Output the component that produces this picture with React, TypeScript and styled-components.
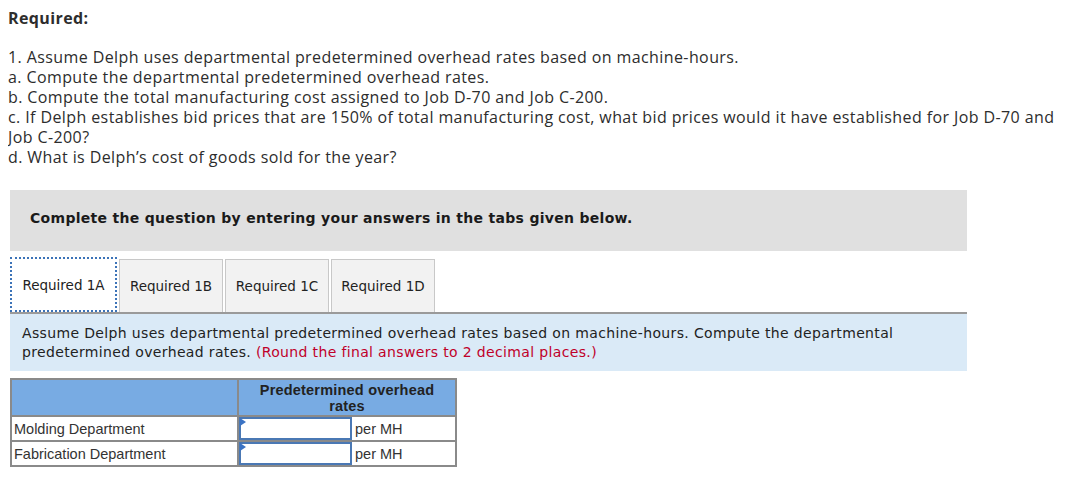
import styled, { createGlobalStyle } from 'styled-components';

const GlobalStyle = createGlobalStyle`
  body {
    margin: 8px;
    background: #ffffff;
    font-family: "Open Sans", "Liberation Sans", sans-serif;
    color: #2d2d2d;
  }
`;

const tabs = ['Required 1A', 'Required 1B', 'Required 1C', 'Required 1D'];

const questions = [
  '1. Assume Delph uses departmental predetermined overhead rates based on machine-hours.',
  'a. Compute the departmental predetermined overhead rates.',
  'b. Compute the total manufacturing cost assigned to Job D-70 and Job C-200.',
  'c. If Delph establishes bid prices that are 150% of total manufacturing cost, what bid prices would it have established for Job D-70 and Job C-200?',
  "d. What is Delph’s cost of goods sold for the year?",
];

const rows = ['Molding Department', 'Fabrication Department'];

export default function App() {
  return (
    <>
      <GlobalStyle />
      <Heading>Required:</Heading>
      <QuestionList>
        {questions.map((q) => (
          <QuestionLine key={q}>{q}</QuestionLine>
        ))}
      </QuestionList>

      <Instruction>Complete the question by entering your answers in the tabs given below.</Instruction>

      <TabBar>
        {tabs.map((t, i) => (
          <Tab key={t} $active={i === 0}>
            {t}
          </Tab>
        ))}
      </TabBar>

      <Panel>
        Assume Delph uses departmental predetermined overhead rates based on machine-hours. Compute the departmental
        predetermined overhead rates. <Hint>(Round the final answers to 2 decimal places.)</Hint>
      </Panel>

      <RateTable>
        <colgroup>
          <col style={{ width: 227 }} />
          <col style={{ width: 114 }} />
          <col style={{ width: 104 }} />
        </colgroup>
        <thead>
          <tr>
            <HeadCell />
            <HeadCell colSpan={2}>
              Predetermined overhead
              <br />
              rates
            </HeadCell>
          </tr>
        </thead>
        <tbody>
          {rows.map((r) => (
            <tr key={r}>
              <LabelCell>{r}</LabelCell>
              <InputCell>
                <Marker />
                <AnswerInput type="text" aria-label={r} />
              </InputCell>
              <UnitCell>per MH</UnitCell>
            </tr>
          ))}
        </tbody>
      </RateTable>
    </>
  );
}

const Heading = styled.div`
  font-size: 16px;
  font-weight: 700;
  line-height: 20px;
  letter-spacing: 0.4px;
  color: #2d2d2d;
  margin-bottom: 19px;
`;

const QuestionList = styled.div`
  font-size: 16px;
  line-height: 20px;
  letter-spacing: 0.4px;
`;

const QuestionLine = styled.div``;

const Instruction = styled.div`
  margin: 23px 0 0 2px;
  width: 957px;
  height: 61px;
  box-sizing: border-box;
  padding: 0 20px 6px;
  display: flex;
  align-items: center;
  background: #e0e0e0;
  font-family: "DejaVu Sans", Verdana, sans-serif;
  font-size: 14px;
  font-weight: 700;
  letter-spacing: 0.3px;
  color: #1a1a1a;
`;

const TabBar = styled.div`
  display: flex;
  gap: 2px;
  margin: 6px 0 0 2px;
  width: 957px;
  align-items: flex-end;
`;

const Tab = styled.div<{ $active?: boolean }>`
  width: ${({ $active }) => ($active ? '107px' : '104px')};
  height: ${({ $active }) => ($active ? '55px' : '53px')};
  box-sizing: border-box;
  display: flex;
  align-items: center;
  justify-content: center;
  font-family: "DejaVu Sans", Tahoma, sans-serif;
  font-size: 13.5px;
  color: #222;
  background: ${({ $active }) => ($active ? '#ffffff' : '#f2f2f2')};
  border: ${({ $active }) => ($active ? '2px dotted #3c73b8' : '1px solid #c8c8c8')};
  border-bottom: ${({ $active }) => ($active ? '2px dotted #3c73b8' : 'none')};
`;

const Panel = styled.div`
  margin-left: 2px;
  width: 957px;
  box-sizing: border-box;
  border-top: 2px solid #9a9a9a;
  background: #daeaf7;
  padding: 10px 12px 9px;
  font-family: "DejaVu Sans", Tahoma, sans-serif;
  font-size: 14px;
  line-height: 19px;
  letter-spacing: 0.35px;
  color: #222;
`;

const Hint = styled.span`
  color: #c0002a;
`;

const RateTable = styled.table`
  margin: 7px 0 0 2px;
  width: 445px;
  border-collapse: collapse;
  table-layout: fixed;
  font-family: "Liberation Sans", Arial, sans-serif;
  font-size: 14.5px;
  color: #333;
`;

const HeadCell = styled.th`
  height: 35px;
  padding: 0;
  background: #78abe3;
  border: 2px solid #8a8a8a;
  font-size: 14.5px;
  font-weight: 700;
  line-height: 16px;
  letter-spacing: 0.2px;
  color: #222;
  text-align: center;
`;

const LabelCell = styled.td`
  height: 23px;
  padding: 0 2px;
  border: 2px solid #8a8a8a;
`;

const InputCell = styled.td`
  position: relative;
  height: 23px;
  padding: 0;
  border: 2px solid #8a8a8a;
  border-right: none;
`;

const Marker = styled.span`
  position: absolute;
  left: 1px;
  top: 1px;
  width: 0;
  height: 0;
  border-top: 4px solid transparent;
  border-bottom: 4px solid transparent;
  border-left: 6px solid #3b73c4;
`;

const AnswerInput = styled.input`
  display: block;
  width: 100%;
  height: 23px;
  box-sizing: border-box;
  border: 2px solid #4a78b4;
  background: #fff;
  outline: none;
`;

const UnitCell = styled.td`
  height: 23px;
  padding: 0 3px;
  border: 2px solid #8a8a8a;
  border-left: none;
`;
